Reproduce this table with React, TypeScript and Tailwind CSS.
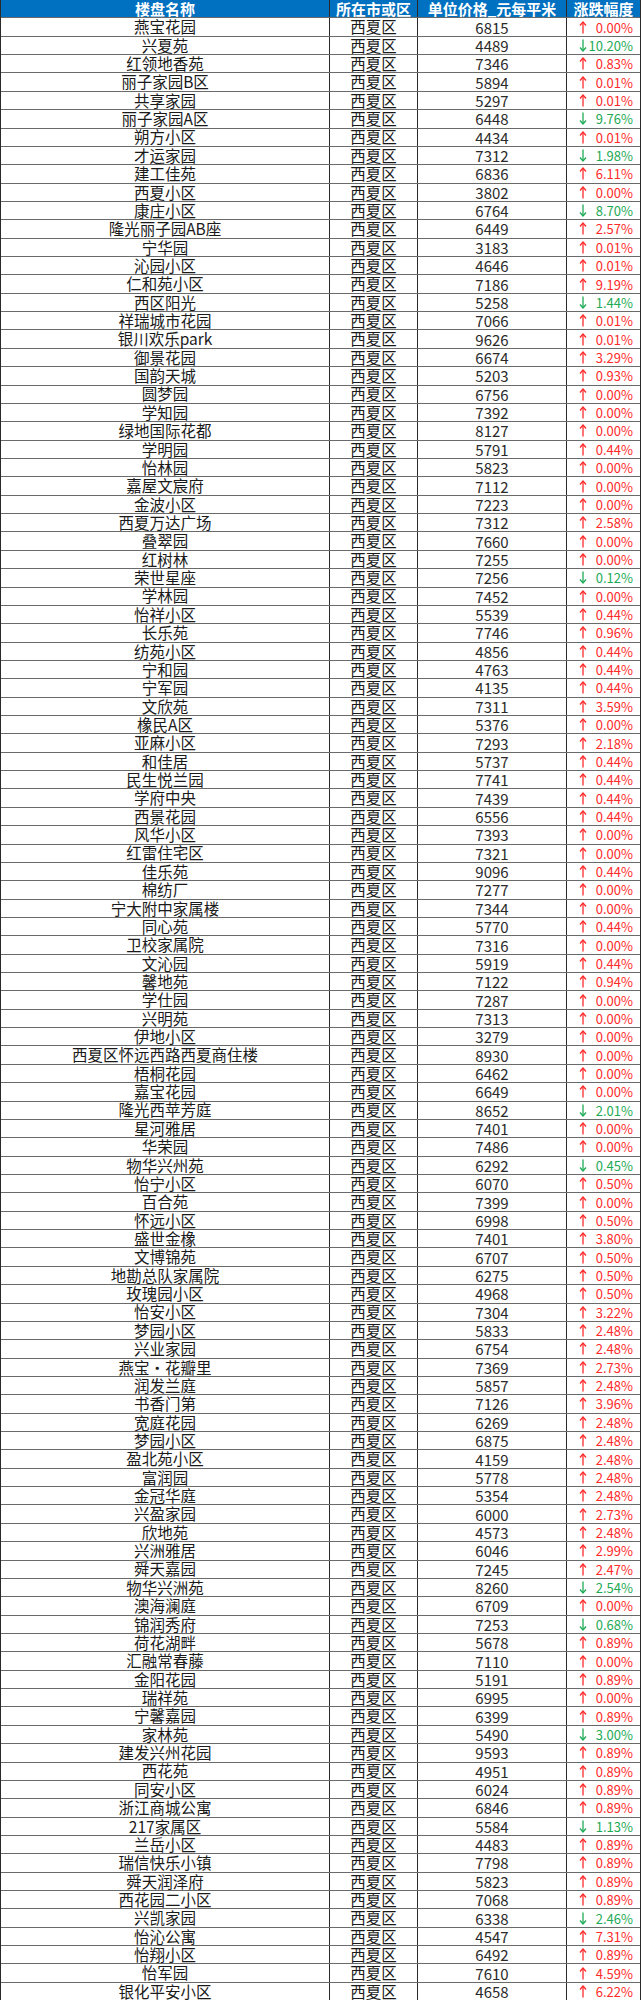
import React from 'react';

type Row = [string, number, string, boolean];

// [name, price, change, isDown]
const rows: Row[] = [
  ['燕宝花园', 6815, '0.00%', false],
  ['兴夏苑', 4489, '10.20%', true],
  ['红领地香苑', 7346, '0.83%', false],
  ['丽子家园B区', 5894, '0.01%', false],
  ['共享家园', 5297, '0.01%', false],
  ['丽子家园A区', 6448, '9.76%', true],
  ['朔方小区', 4434, '0.01%', false],
  ['才运家园', 7312, '1.98%', true],
  ['建工佳苑', 6836, '6.11%', false],
  ['西夏小区', 3802, '0.00%', false],
  ['康庄小区', 6764, '8.70%', true],
  ['隆光丽子园AB座', 6449, '2.57%', false],
  ['宁华园', 3183, '0.01%', false],
  ['沁园小区', 4646, '0.01%', false],
  ['仁和苑小区', 7186, '9.19%', false],
  ['西区阳光', 5258, '1.44%', true],
  ['祥瑞城市花园', 7066, '0.01%', false],
  ['银川欢乐park', 9626, '0.01%', false],
  ['御景花园', 6674, '3.29%', false],
  ['国韵天城', 5203, '0.93%', false],
  ['圆梦园', 6756, '0.00%', false],
  ['学知园', 7392, '0.00%', false],
  ['绿地国际花都', 8127, '0.00%', false],
  ['学明园', 5791, '0.44%', false],
  ['怡林园', 5823, '0.00%', false],
  ['嘉屋文宸府', 7112, '0.00%', false],
  ['金波小区', 7223, '0.00%', false],
  ['西夏万达广场', 7312, '2.58%', false],
  ['叠翠园', 7660, '0.00%', false],
  ['红树林', 7255, '0.00%', false],
  ['荣世星座', 7256, '0.12%', true],
  ['学林园', 7452, '0.00%', false],
  ['怡祥小区', 5539, '0.44%', false],
  ['长乐苑', 7746, '0.96%', false],
  ['纺苑小区', 4856, '0.44%', false],
  ['宁和园', 4763, '0.44%', false],
  ['宁军园', 4135, '0.44%', false],
  ['文欣苑', 7311, '3.59%', false],
  ['橡民A区', 5376, '0.00%', false],
  ['亚麻小区', 7293, '2.18%', false],
  ['和佳居', 5737, '0.44%', false],
  ['民生悦兰园', 7741, '0.44%', false],
  ['学府中央', 7439, '0.44%', false],
  ['西景花园', 6556, '0.44%', false],
  ['风华小区', 7393, '0.00%', false],
  ['红雷住宅区', 7321, '0.00%', false],
  ['佳乐苑', 9096, '0.44%', false],
  ['棉纺厂', 7277, '0.00%', false],
  ['宁大附中家属楼', 7344, '0.00%', false],
  ['同心苑', 5770, '0.44%', false],
  ['卫校家属院', 7316, '0.00%', false],
  ['文沁园', 5919, '0.44%', false],
  ['馨地苑', 7122, '0.94%', false],
  ['学仕园', 7287, '0.00%', false],
  ['兴明苑', 7313, '0.00%', false],
  ['伊地小区', 3279, '0.00%', false],
  ['西夏区怀远西路西夏商住楼', 8930, '0.00%', false],
  ['梧桐花园', 6462, '0.00%', false],
  ['嘉宝花园', 6649, '0.00%', false],
  ['隆光西苹芳庭', 8652, '2.01%', true],
  ['星河雅居', 7401, '0.00%', false],
  ['华荣园', 7486, '0.00%', false],
  ['物华兴州苑', 6292, '0.45%', true],
  ['怡宁小区', 6070, '0.50%', false],
  ['百合苑', 7399, '0.00%', false],
  ['怀远小区', 6998, '0.50%', false],
  ['盛世金橡', 7401, '3.80%', false],
  ['文博锦苑', 6707, '0.50%', false],
  ['地勘总队家属院', 6275, '0.50%', false],
  ['玫瑰园小区', 4968, '0.50%', false],
  ['怡安小区', 7304, '3.22%', false],
  ['梦园小区', 5833, '2.48%', false],
  ['兴业家园', 6754, '2.48%', false],
  ['燕宝·花瓣里', 7369, '2.73%', false],
  ['润发兰庭', 5857, '2.48%', false],
  ['书香门第', 7126, '3.96%', false],
  ['宽庭花园', 6269, '2.48%', false],
  ['梦园小区', 6875, '2.48%', false],
  ['盈北苑小区', 4159, '2.48%', false],
  ['富润园', 5778, '2.48%', false],
  ['金冠华庭', 5354, '2.48%', false],
  ['兴盈家园', 6000, '2.73%', false],
  ['欣地苑', 4573, '2.48%', false],
  ['兴洲雅居', 6046, '2.99%', false],
  ['舜天嘉园', 7245, '2.47%', false],
  ['物华兴洲苑', 8260, '2.54%', true],
  ['澳海澜庭', 6709, '0.00%', false],
  ['锦润秀府', 7253, '0.68%', true],
  ['荷花湖畔', 5678, '0.89%', false],
  ['汇融常春藤', 7110, '0.00%', false],
  ['金阳花园', 5191, '0.89%', false],
  ['瑞祥苑', 6995, '0.00%', false],
  ['宁馨嘉园', 6399, '0.89%', false],
  ['家林苑', 5490, '3.00%', true],
  ['建发兴州花园', 9593, '0.89%', false],
  ['西花苑', 4951, '0.89%', false],
  ['同安小区', 6024, '0.89%', false],
  ['浙江商城公寓', 6846, '0.89%', false],
  ['217家属区', 5584, '1.13%', true],
  ['兰岳小区', 4483, '0.89%', false],
  ['瑞信快乐小镇', 7798, '0.89%', false],
  ['舜天润泽府', 5823, '0.89%', false],
  ['西花园二小区', 7068, '0.89%', false],
  ['兴凯家园', 6338, '2.46%', true],
  ['怡沁公寓', 4547, '7.31%', false],
  ['怡翔小区', 6492, '0.89%', false],
  ['怡军园', 7610, '4.59%', false],
  ['银化平安小区', 4658, '6.22%', false],
];

const Arrow = ({ down }: { down: boolean }) => (
  <svg width="8" height="13" viewBox="0 0 8 13" fill="none" stroke="currentColor" strokeWidth="1.3">
    {down ? (
      <>
        <path d="M4 0.5 V12" />
        <path d="M1 8.5 L4 12 L7 8.5" />
      </>
    ) : (
      <>
        <path d="M4 1 V12.5" />
        <path d="M1 4.5 L4 1 L7 4.5" />
      </>
    )}
  </svg>
);

const cols = 'grid grid-cols-[329px_88px_149px_1fr] flex-1 min-h-0 border-b border-[#6a6a6a]';
const cell = 'flex items-center justify-center border-r border-[#2a2a2a] leading-none';

export default function App() {
  return (
    <div
      className="w-[641px] h-[2000px] flex flex-col bg-white border-x border-[#2a2a2a]"
      style={{ fontFamily: '"Noto Sans CJK SC", "Noto Sans", sans-serif' }}
    >
      {/* header */}
      <div className={`${cols} bg-[#0070c0] text-white font-bold text-[15px]`}>
        <div className={cell}>楼盘名称</div>
        <div className={cell}>所在市或区</div>
        <div className={`${cell} whitespace-nowrap`}>单位价格_元每平米</div>
        <div className="flex items-center justify-center leading-none">涨跌幅度</div>
      </div>

      {rows.map(([name, price, pct, down], i) => (
        <div
          key={i}
          className={`${cols} text-[15.5px] text-[#1a1a1a] ${i === rows.length - 1 ? 'border-b-0' : ''}`}
        >
          <div className={`${cell} whitespace-nowrap`}>{name}</div>
          <div className={cell}>西夏区</div>
          <div className={`${cell} text-[15px] text-[#2a2a2a]`}>{price}</div>
          <div
            className={`flex items-center justify-between pl-[12px] pr-[7px] leading-none text-[13px] ${
              down ? 'text-[#1eaa55]' : 'text-[#ff2a2a]'
            }`}
          >
            <Arrow down={down} />
            <span>{pct}</span>
          </div>
        </div>
      ))}
    </div>
  );
}
